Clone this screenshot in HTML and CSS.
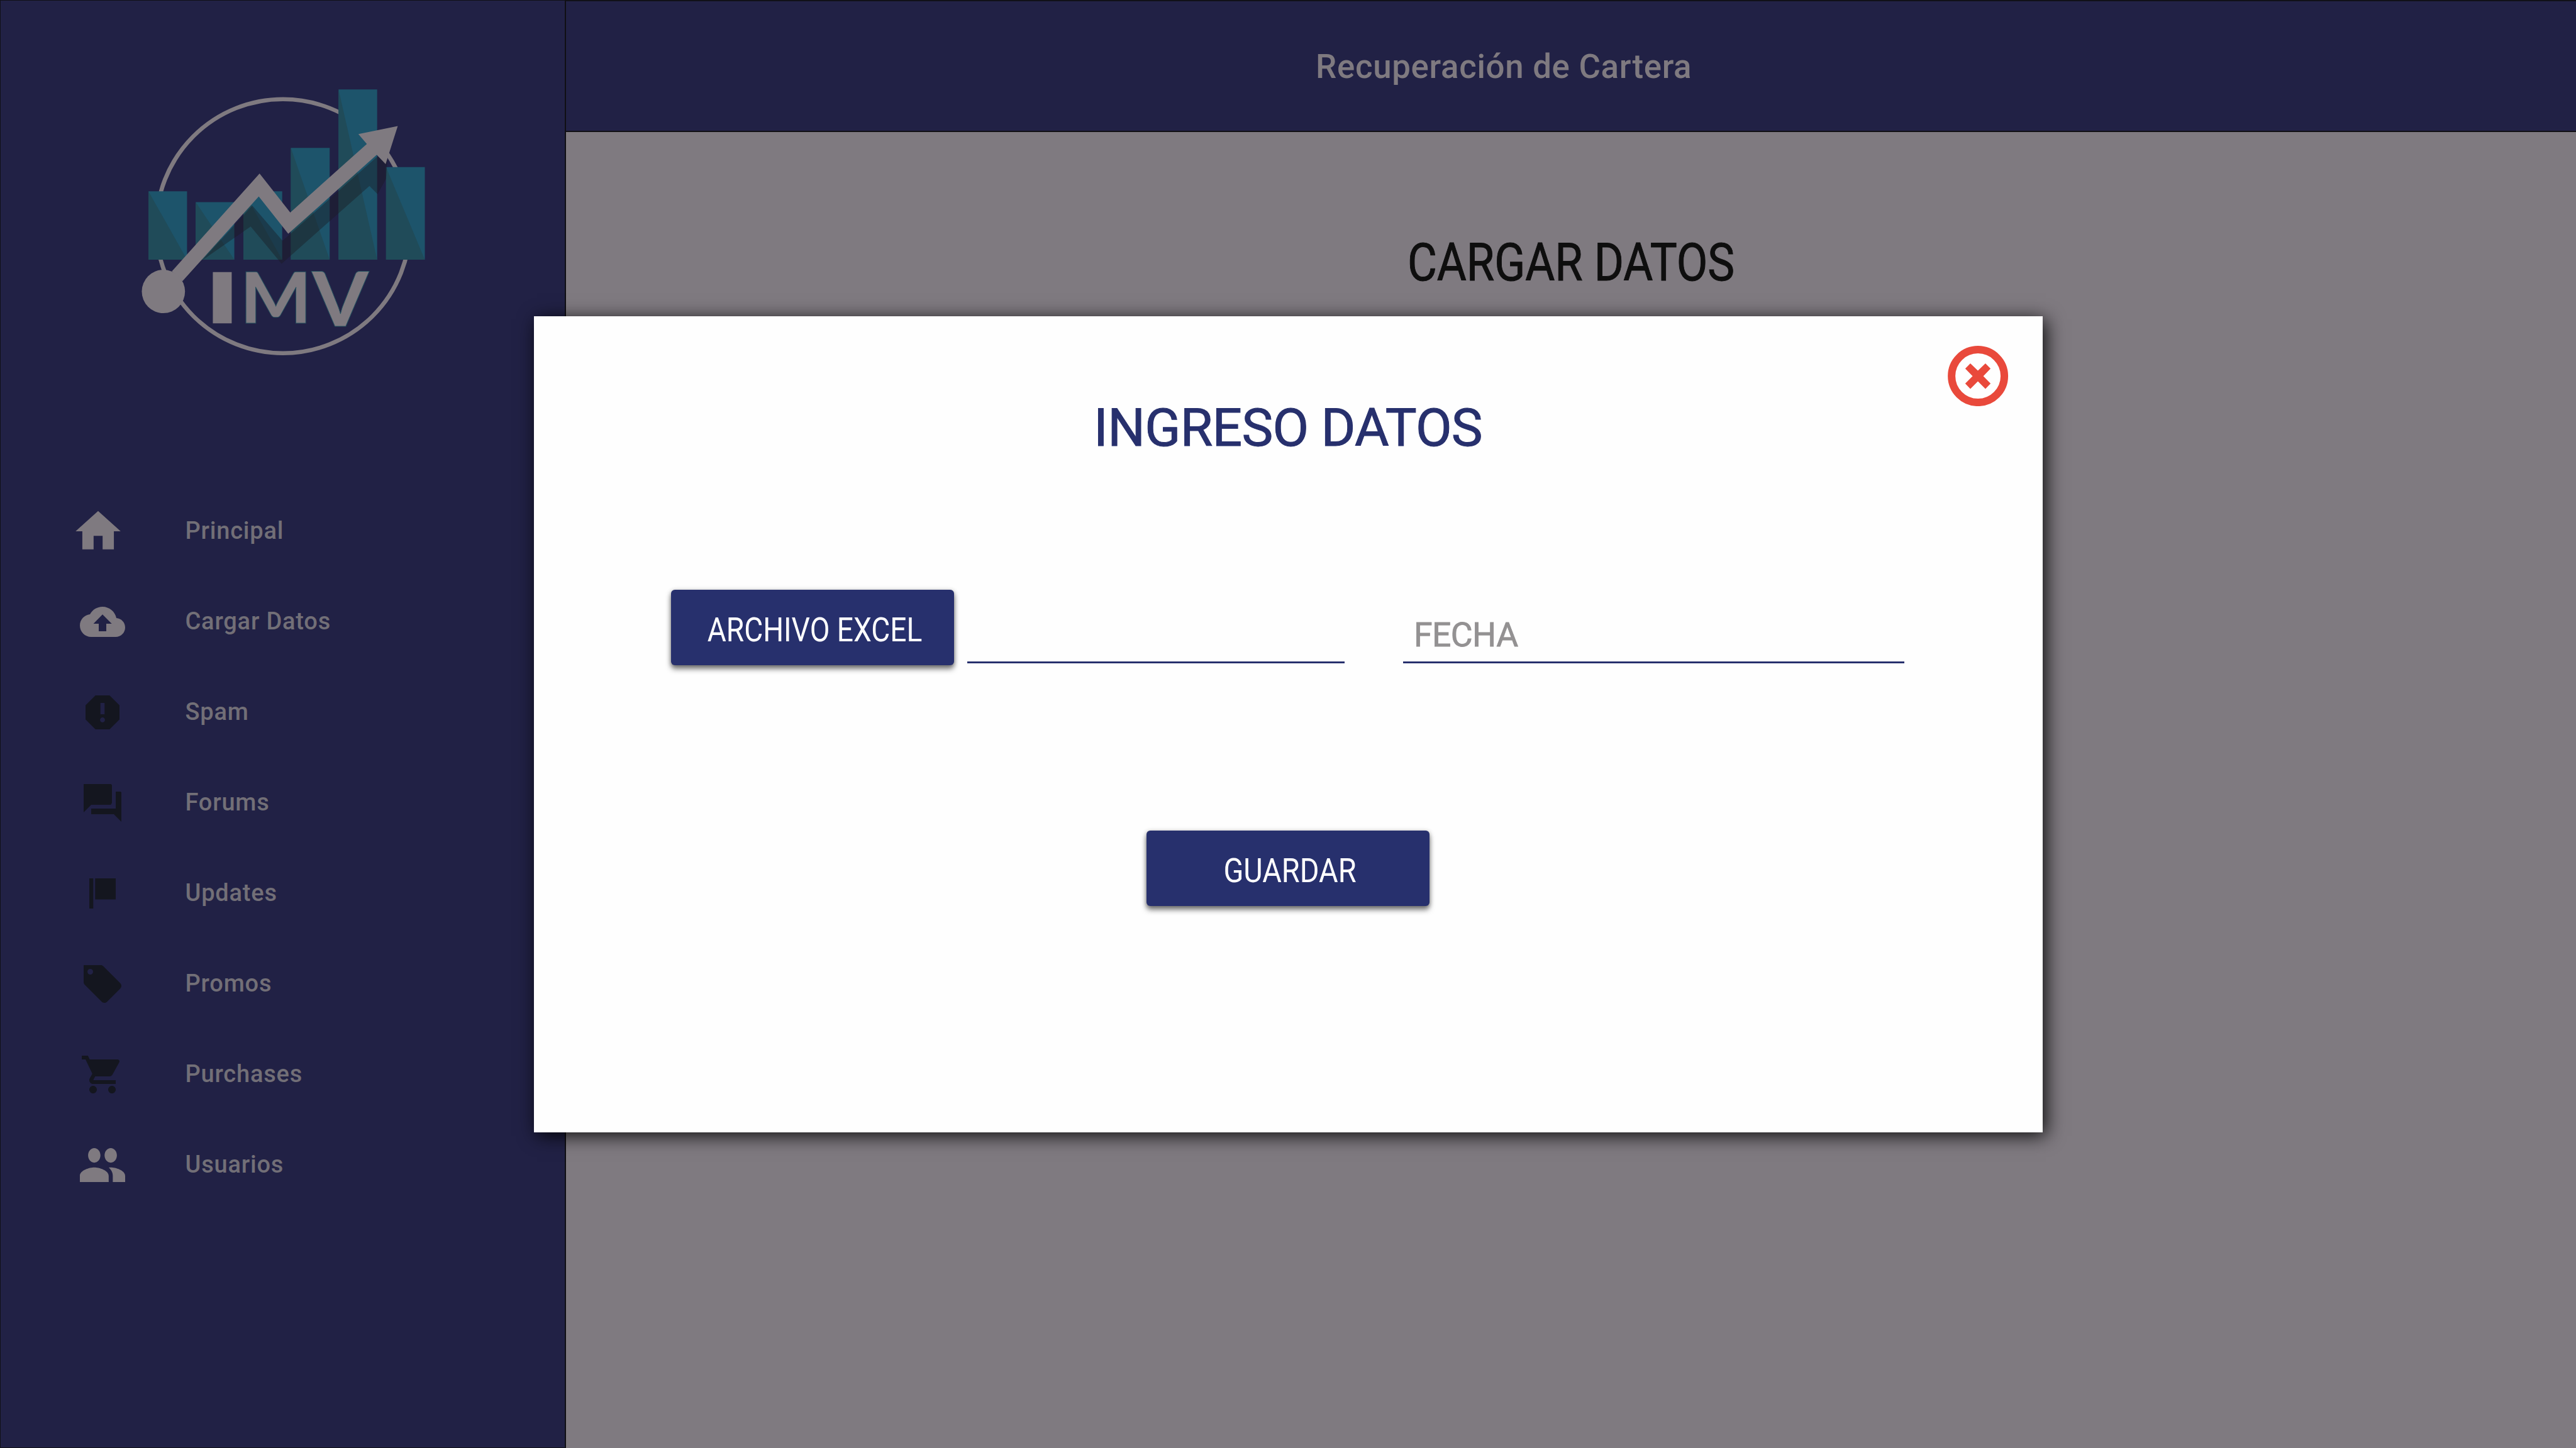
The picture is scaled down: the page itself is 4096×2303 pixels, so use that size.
FILE: index.html
```html
<!DOCTYPE html>
<html lang="es">
<head>
<meta charset="utf-8">
<title>Recuperación de Cartera</title>
<link rel="stylesheet" href="styles.css">
</head>
<body>
<div class="app">
  <aside class="sidebar">
    <svg class="logo" viewBox="0 0 700 660">
      <g transform="scale(.44643 .42092)">
        <ellipse class="ring" cx="772" cy="808" rx="628" ry="667"/>
        <path class="bar" d="M106 625h191v359H106zM340 682h191v302H340zM576 625h192v359H576zM811 397h192v587H811zM1047 90h191v894h-191zM1282 498h192v486h-192z"/>
        <path class="bar-shade" d="M106 625v359h191zM340 682v302h191zM576 625v359h192zM811 397v587h192zM1047 90v894h191zM1282 498v486h192z"/>
        <path class="arrow-shadow" d="M274 1100L620 700 770 885 1236 445 1290 440 1282 560 1240 640 1200 597 765 1005 612 810 375 985z"/>
        <path class="arrow" d="M222 1045L656 532 808 736 1187 376 1145 324 1340 282 1280 482 1236 433 798 848 652 652 274 1097z"/>
        <ellipse class="arrow" cx="180" cy="1151" rx="107" ry="114"/>
        <text class="brand" y="1317"><tspan class="brand-i" x="423" dy="-14">I</tspan><tspan x="560" dy="14">M</tspan><tspan class="brand-v" x="916" dy="18">V</tspan></text>
      </g>
    </svg>
    <nav class="nav">
      <a class="item"><svg class="icon icon-home light" viewBox="0 0 24 24"><path d="M10 20v-6h4v6h5v-8h3L12 3 2 12h3v8z"/></svg><span>Principal</span></a>
      <a class="item"><svg class="icon light" viewBox="0 0 24 24"><path d="M19.35 10.04C18.67 6.59 15.64 4 12 4 9.11 4 6.6 5.64 5.35 8.04 2.34 8.36 0 10.91 0 14c0 3.31 2.69 6 6 6h13c2.76 0 5-2.24 5-5 0-2.64-2.05-4.78-4.65-4.96zM14 13v4h-4v-4H7.2L12 8.1l4.9 4.9z"/></svg><span>Cargar Datos</span></a>
      <a class="item"><svg class="icon" viewBox="0 0 24 24"><path d="M15.73 3H8.27L3 8.27v7.46L8.27 21h7.46L21 15.73V8.27zM12 17.3c-.72 0-1.3-.58-1.3-1.3s.58-1.3 1.3-1.3 1.3.58 1.3 1.3-.58 1.3-1.3 1.3zm1.1-4.3h-2.2V7h2.2z"/></svg><span>Spam</span></a>
      <a class="item"><svg class="icon" viewBox="0 0 24 24"><path d="M21.6 6H19v9H6v3h12l4 4V6.4zM17 12V2.6L16.5 2H2v15l4-4h10.4z"/></svg><span>Forums</span></a>
      <a class="item"><svg class="icon" viewBox="0 0 24 24"><path d="M5 4h2.1v16H5zM8.1 4H19v11.2H8.1z"/></svg><span>Updates</span></a>
      <a class="item"><svg class="icon" viewBox="0 0 24 24"><path d="M21.41 11.58l-9-9C12.05 2.22 11.55 2 11 2H2v9c0 .55.22 1.05.59 1.42l9 9c.36.36.86.58 1.41.58s1.05-.22 1.41-.59l7-7c.37-.36.59-.86.59-1.41s-.23-1.06-.59-1.42zM5.5 7C4.67 7 4 6.33 4 5.5S4.67 4 5.5 4 7 4.67 7 5.5 6.33 7 5.5 7z"/></svg><span>Promos</span></a>
      <a class="item"><svg class="icon" viewBox="0 0 24 24"><path d="M7 18c-1.1 0-1.99.9-1.99 2S5.9 22 7 22s2-.9 2-2-.9-2-2-2zM1 2v2h2l3.6 7.59-1.35 2.45c-.16.28-.25.61-.25.96 0 1.1.9 2 2 2h12v-2H7.42c-.14 0-.25-.11-.25-.25l.03-.12.9-1.63h7.45c.75 0 1.41-.41 1.75-1.03l3.58-6.49C20.96 5.34 21 5.17 21 5c0-.55-.45-1-1-1H5.21l-.94-2zm16 16c-1.1 0-1.99.9-1.99 2s.89 2 1.99 2 2-.9 2-2-.9-2-2-2z"/></svg><span>Purchases</span></a>
      <a class="item"><svg class="icon icon-users light" viewBox="1 5 22 14" preserveAspectRatio="none"><path d="M16 11c1.66 0 2.99-1.34 2.99-3S17.66 5 16 5s-3 1.34-3 3 1.34 3 3 3zm-8 0c1.66 0 2.99-1.34 2.99-3S9.66 5 8 5 5 6.34 5 8s1.34 3 3 3zm0 2c-2.33 0-7 1.17-7 3.5V19h14v-2.5c0-2.33-4.67-3.5-7-3.5zm8 0c-.29 0-.62.02-.97.05 1.16.84 1.97 1.97 1.97 3.45V19h6v-2.5c0-2.33-4.67-3.5-7-3.5z"/></svg><span>Usuarios</span></a>
    </nav>
  </aside>
  <div class="main">
    <header class="topbar"><span>Recuperación de Cartera</span></header>
    <main class="content"><h1>CARGAR DATOS</h1></main>
  </div>
</div>
<div class="overlay">
  <section class="modal">
    <svg class="close" viewBox="0 0 401 401"><circle cx="200.5" cy="200.5" r="175"/><path d="M116 151l34-34 50 48 50-48 34 34-48 50 48 49-34 36-50-50-50 50-34-36 49-49z"/></svg>
    <h2>INGRESO DATOS</h2>
    <div class="fields">
      <button class="btn"><span class="archivo">ARCHIVO EXCEL</span></button>
      <div class="field file"></div>
      <div class="field date">FECHA</div>
    </div>
    <button class="btn save"><span class="guardar">GUARDAR</span></button>
  </section>
</div>
</body>
</html>
```
FILE: styles.css
```css
* { box-sizing: border-box; }
html, body { margin: 0; height: 100%; overflow: hidden; }
body { font-family: Roboto, sans-serif; background: #7f7a80; }
h1, h2 { margin: 0; font-size: 83.8px; line-height: 100px; font-weight: 400; white-space: nowrap; -webkit-text-stroke: 1px currentColor; }

.app { display: flex; width: 100%; height: 100%; }
.sidebar { width: 900px; padding-top: 114px; background: #212145; border: 1px solid #111118; border-right: 2px solid #100f14; }
.logo { display: block; width: 503.7px; height: 474.9px; margin-left: 200.5px; }
.ring { fill: none; stroke: #7f7a80; stroke-width: 21; }
.bar { fill: #1d546b; }
.bar-shade { fill: #204b59; }
.arrow-shadow { fill: #1a1a22; opacity: .42; }
.arrow { fill: #7f7a80; }
.brand { font-family: Lato, sans-serif; font-weight: 900; font-size: 370px; fill: #7f7a80; stroke: #24505f; stroke-width: 3; }
.brand-i { font-family: Inter, sans-serif; font-size: 330px; stroke: #7f7a80; stroke-width: 28; }
.brand-v { font-size: 398px; }

.nav { margin-top: 182.7px; }
.item { display: flex; align-items: center; height: 144px; padding-left: 126px; gap: 95.5px; font-size: 38px; font-weight: 500; letter-spacing: .8px; color: #726f77; }
.item span { margin-top: -2px; }
.icon { width: 72px; height: 72px; fill: #14161f; flex: none; }
.light { fill: #7f7a80; }
.icon-home { width: 86px; height: 86px; margin-left: -14px; }
.icon-users { height: 54px; }

.main { flex: 1; display: flex; flex-direction: column; }
.topbar { display: flex; align-items: center; height: 210px; padding: 1px 0 0 1192px; background: #212145; border-top: 2px solid #111118; border-bottom: 2px solid #100f14; font-size: 52.8px; font-weight: 500; color: #7f7a80; letter-spacing: .7px; }
.content { padding-top: 157px; text-align: center; }
h1 { color: #0e0e0e; transform: scaleX(.86); }

.overlay { position: absolute; inset: 0; display: flex; align-items: center; justify-content: center; }
.modal { position: relative; display: flex; flex-direction: column; align-items: center; width: 2399px; height: 1298px; padding-top: 127px; background: #fefefe; box-shadow: 5px 5px 28px rgba(0, 0, 0, .9); }
h2 { color: #27306d; letter-spacing: -.7px; }
.close { position: absolute; top: 47.5px; right: 54px; width: 96.2px; height: 96.2px; fill: #e9493b; }
.close circle { fill: none; stroke: #e9493b; stroke-width: 50; }
.fields { display: flex; align-self: stretch; margin-top: 208px; padding-left: 218.5px; }
.btn { width: 450px; height: 120px; padding: 8px 0 0 7px; border: 0; border-radius: 6px; background: #27306d; color: #fefefe; font: 400 53.3px Roboto, sans-serif; white-space: nowrap; box-shadow: 0 6px 9px rgba(0, 0, 0, .5), 0 1px 7px rgba(0, 0, 0, .25); }
.btn span { display: inline-block; transform: scaleX(.865); }
.btn .archivo { margin: 0 -30px; }
.btn .guardar { transform: scaleX(.88); }
.save { padding-left: 5px; }
.field { height: 117.4px; border-bottom: 3px solid #27306d; }
.file { width: 600.6px; margin-left: 20.5px; }
.date { width: 797px; margin-left: 92.8px; padding: 42px 0 0 17px; font-size: 53.6px; line-height: 60px; font-weight: 400; letter-spacing: -.6px; color: #939192; -webkit-text-stroke: .8px currentColor; }
.save { margin-top: 263.5px; }
```
